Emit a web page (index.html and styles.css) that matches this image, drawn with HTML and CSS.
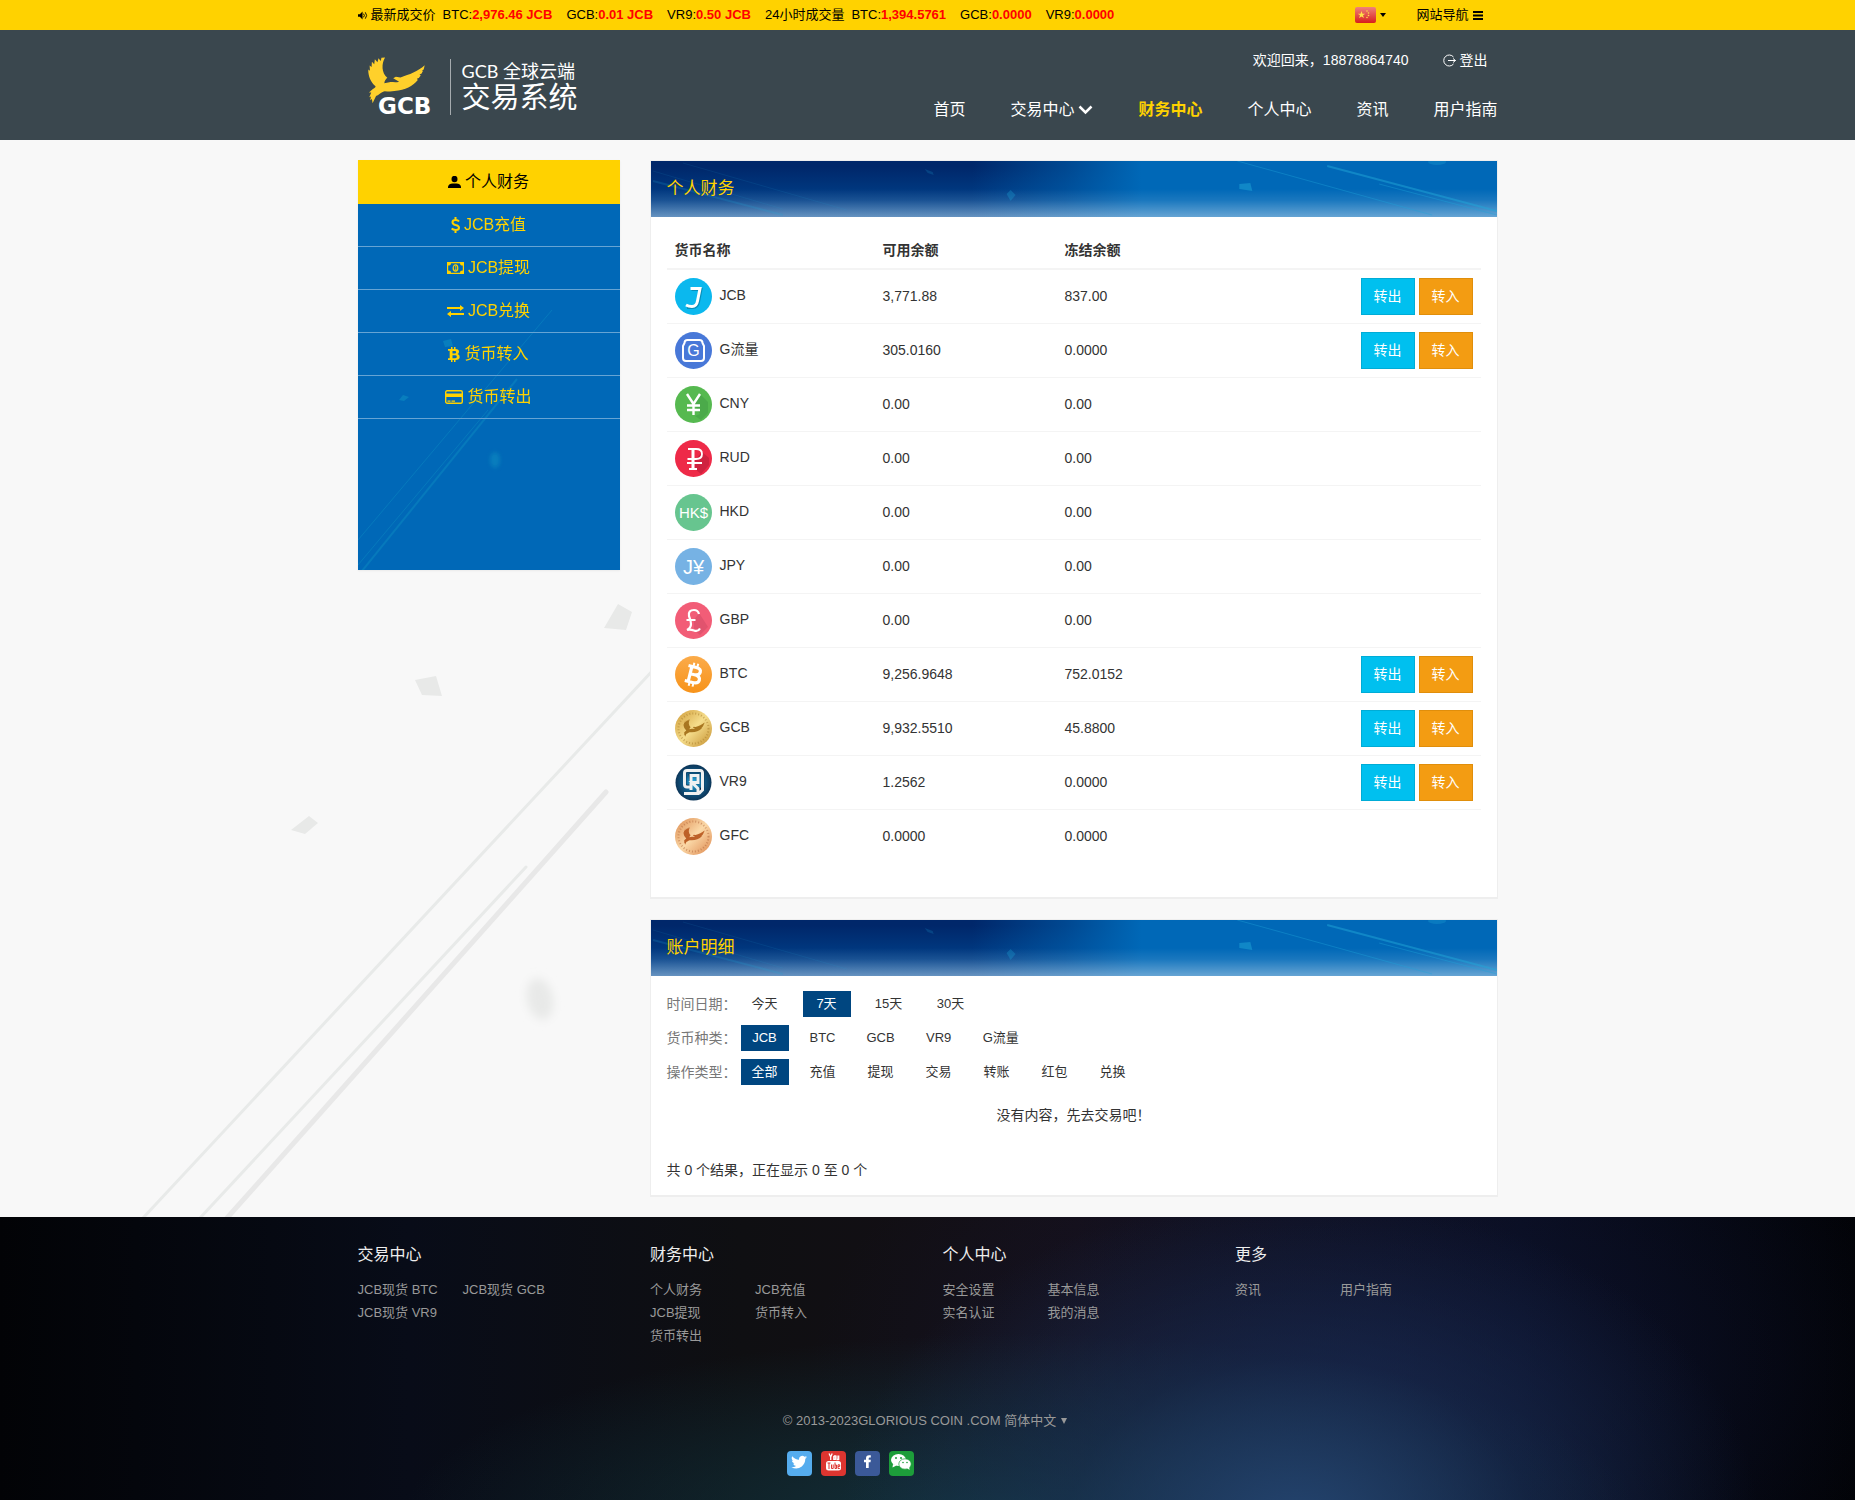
FILE: index.html
```html
<!DOCTYPE html>
<html lang="zh-CN">
<head>
<meta charset="utf-8">
<meta name="viewport" content="width=device-width, initial-scale=1">
<title>个人财务 - GCB 全球云端交易系统</title>
<link rel="stylesheet" href="styles.css">
</head>
<body>
<svg class="defs" aria-hidden="true">
  <defs>
    <symbol id="bird" viewBox="50 48 180 144">
      <path d="M105 51C94 70 94 98 112 113C106 118 103 124 103 130L122 126C130 126 138 128 148 125L130 115L138 110L152 112C180 103 205 94 226 75L223 88L217 91L221 92L216 101L210 103L214 106L208 114L202 116L205 120L198 128C180 145 150 158 104 154C90 158 84 168 78 168L67 191L65 178L60 182L62 170L57 173L63 158L56 158L67 148C75 144 76 142 76 139C62 128 53 108 54 88L59 92L58 76L64 80L65 64L72 72L74 57L82 66L85 54L92 62L94 52Z"/>
    </symbol>
    <symbol id="head-art" viewBox="0 0 847 56" preserveAspectRatio="none">
      <g fill="none" stroke="#1fa5d8">
        <path d="M32 2L196 49" opacity=".12"/>
        <path d="M2 10L132 48" opacity=".12"/>
        <path d="M2 20L132 54" stroke-width="2" opacity=".2"/>
        <path d="M587 0L782 54" opacity=".4"/>
        <path d="M677 5L847 50" stroke-width="2" opacity=".5"/>
        <path d="M729 23L847 54" opacity=".4"/>
      </g>
      <g fill="#1fa5d8">
        <path d="M274 8L282 11L283 14L277 12Z" opacity=".2"/>
        <path d="M356 33L360 29L365 34L360 40Z" opacity=".3"/>
        <path d="M589 23L600 22L602 30L589 28Z" opacity=".5"/>
        <ellipse cx="787" cy="1" rx="9" ry="3" opacity=".3"/>
      </g>
    </symbol>
    <linearGradient id="gold" x1="0" y1="0" x2="1" y2="1"><stop offset="0" stop-color="#cf9a35"/><stop offset=".5" stop-color="#f5dd8c"/><stop offset="1" stop-color="#c48f2e"/></linearGradient>
    <linearGradient id="bronze" x1="0" y1="0" x2="1" y2="1"><stop offset="0" stop-color="#dc8a4e"/><stop offset=".5" stop-color="#fbd9a8"/><stop offset="1" stop-color="#dd874d"/></linearGradient>
    <linearGradient id="orange" x1="0" y1="0" x2="0" y2="1"><stop offset="0" stop-color="#fbab4a"/><stop offset="1" stop-color="#f7931a"/></linearGradient>
    <radialGradient id="navy"><stop offset="0" stop-color="#2fb5e8"/><stop offset=".5" stop-color="#12618f"/><stop offset="1" stop-color="#0c3558"/></radialGradient>
    <filter id="soft" x="-50%" y="-50%" width="200%" height="200%"><feGaussianBlur stdDeviation="5"/></filter>
    <filter id="soft-small" x="-50%" y="-50%" width="200%" height="200%"><feGaussianBlur stdDeviation="2"/></filter>
  </defs>
</svg>

<div class="topbar">
  <div class="container topbar-row">
    <div class="ticker">
      <svg class="speaker" viewBox="0 0 11 9" aria-hidden="true"><path d="M0 3h2l3-3v9L2 6H0z"/><path d="M6 2.500q2 2 0 4M8 1q3 3.500 0 7" fill="none" stroke="#000"/></svg>
      <span class="ticker-label">最新成交价</span>
      <span class="quote">BTC:<b>2,976.46 JCB</b></span>
      <span class="quote">GCB:<b>0.01 JCB</b></span>
      <span class="quote">VR9:<b>0.50 JCB</b></span>
      <span class="ticker-label">24小时成交量</span>
      <span class="quote">BTC:<b>1,394.5761</b></span>
      <span class="quote">GCB:<b>0.0000</b></span>
      <span class="quote">VR9:<b>0.0000</b></span>
    </div>
    <div class="tools">
      <button class="tool" type="button" aria-label="语言">
        <svg class="flag" viewBox="0 0 21 16" aria-hidden="true"><defs><linearGradient id="flag-red" x1="0" y1="0" x2="0" y2="1"><stop offset="0" stop-color="#f0837a"/><stop offset="1" stop-color="#d81f1c"/></linearGradient></defs><rect width="21" height="16" rx="2" fill="url(#flag-red)"/><path d="M6.500 4l1 2.700h2.800L8 8.300l.9 2.700-2.400-1.600L4.100 11 5 8.300 2.700 6.700h2.800z" fill="#ffe14a"/><g fill="#ffd94a"><circle cx="12" cy="4" r=".8"/><circle cx="13.500" cy="6" r=".8"/><circle cx="13.500" cy="8.500" r=".8"/><circle cx="12" cy="10.500" r=".8"/></g></svg>
        <svg class="caret" viewBox="0 0 6 4" aria-hidden="true"><path d="M0 0h6L3 4z"/></svg>
      </button>
      <button class="tool" type="button">网站导航
        <svg class="bars" viewBox="0 0 10 9" aria-hidden="true"><path d="M0 0h10v2H0zM0 3.500h10v2H0zM0 7h10v2H0z"/></svg>
      </button>
    </div>
  </div>
</div>

<header class="header">
  <div class="container header-row">
    <a class="logo" href="#">
      <svg class="logo-mark" viewBox="0 0 68 62" role="img" aria-label="GCB">
        <use href="#bird" x="0" y="0" width="59" height="48" fill="#ffd02b"/>
        <text x="11" y="58" class="logo-letters">GCB</text>
      </svg>
      <span class="logo-words"><span class="logo-top">GCB 全球云端</span><span class="logo-name">交易系统</span></span>
    </a>
    <div class="header-side">
      <div class="user">
        <span>欢迎回来，18878864740</span>
        <a class="logout" href="#"><svg class="logout-icon" viewBox="0 0 13 13" fill="none" stroke="#fff" aria-hidden="true"><path d="M10.500 3A5.500 5.500 0 1 0 10.500 10M5 6.500h7.500M10 4.500l2.500 2-2.500 2"/></svg>登出</a>
      </div>
      <nav class="nav">
        <a href="#">首页</a>
        <a href="#">交易中心<svg class="chevron" viewBox="0 0 15 10" fill="none" stroke="#fff" stroke-width="2.500" aria-hidden="true"><path d="M1.500 1.500l6 6 6-6"/></svg></a>
        <a href="#" class="current">财务中心</a>
        <a href="#">个人中心</a>
        <a href="#">资讯</a>
        <a href="#">用户指南</a>
      </nav>
    </div>
  </div>
</header>

<div class="page">
  <svg class="page-art" viewBox="0 576 660 640" aria-hidden="true">
    <g fill="#e8e9e8">
      <path d="M618 603L632 611L626 629L604 627Z"/>
      <path d="M415 679L436 675L442 695L422 694Z"/>
      <path d="M291 829L309 815L318 822L305 833Z"/>
      <ellipse cx="540" cy="998" rx="13" ry="21" filter="url(#soft)" transform="rotate(-12 540 998)"/>
    </g>
    <g fill="none" stroke="#e8eae9" stroke-width="3" stroke-linecap="round">
      <path d="M655 667L143 1217"/>
      <path d="M526 866L200 1217"/>
      <path d="M606 791L227 1217" stroke-width="5" stroke="#e8e8e8"/>
    </g>
  </svg>
  <div class="container columns">
    <aside class="sidebar">
      <svg class="sidebar-art" viewBox="0 0 262 410" preserveAspectRatio="none" aria-hidden="true">
        <g fill="none" stroke="#14a0c8" opacity=".3"><path d="M194 150L0 380"/><path d="M130 250L0 405"/><path d="M159 219L4 411" stroke-width="2"/></g>
        <g fill="#14a0c8" opacity=".4"><path d="M85 181L93 179L95 186L87 187Z"/><path d="M41 240L45 235L51 237L46 241Z"/><ellipse cx="137" cy="300" rx="5" ry="8" filter="url(#soft-small)"/></g>
      </svg>
      <nav class="side-menu">
        <a href="#" class="current"><svg width="13" height="12" viewBox="0 0 13 12" fill="currentColor" aria-hidden="true"><ellipse cx="6.500" cy="3" rx="3" ry="3.200"/><path d="M0 12V10.500Q1 7.500 4.500 7.500h4Q12 7.500 13 10.500V12z"/></svg>个人财务</a>
        <a href="#"><svg width="9" height="16" viewBox="0 0 9 16" fill="none" stroke="currentColor" stroke-width="2" aria-hidden="true"><path d="M8 4.500Q7 3 4.500 3 1.500 3 1.500 5.200 1.500 7.200 4.500 8 8 8.800 8 10.800 8 13 4.500 13 2 13 .7 11.500M4.500 0v3M4.500 13v3"/></svg>JCB充值</a>
        <a href="#"><svg width="17" height="12" viewBox="0 0 17 12" aria-hidden="true"><path fill="currentColor" fill-rule="evenodd" d="M0 0h17v12H0zM4 1.200Q4 3.500 1.200 3.500v5Q4 8.500 4 10.800h9Q13 8.500 15.800 8.500v-5Q13 3.500 13 1.200z"/><ellipse cx="8.500" cy="6" rx="2.300" ry="3.200" fill="none" stroke="currentColor" stroke-width="1.200"/><path d="M8 4.500h.8V8M7.500 8h2" stroke="currentColor" stroke-width=".8" fill="none"/></svg>JCB提现</a>
        <a href="#"><svg width="17" height="12" viewBox="0 0 17 12" fill="currentColor" aria-hidden="true"><path d="M0 2h13V0L17 3l-4 3V4H0zM17 8H4V6L0 9l4 3v-2H17z"/></svg>JCB兑换</a>
        <a href="#"><svg width="12" height="15" viewBox="0 0 12 15" aria-hidden="true"><path fill="currentColor" fill-rule="evenodd" d="M0 2h3V0h1.500v2H6V0h1.500v2Q11 2.200 11 4.700 11 6.500 9.500 7 11.700 7.700 11.700 10 11.700 13 7.500 13v2H6v-2H4.500v2H3v-2H0v-1.800h1.700V3.800H0zM4.500 4v2.500H6.500Q8.200 6.500 8.200 5.200T6.500 4zM4.500 8.300v2.900H7Q8.800 11.200 8.800 9.700T7 8.300z"/></svg>货币转入</a>
        <a href="#"><svg width="18" height="14" viewBox="0 0 18 14" aria-hidden="true"><rect x=".7" y=".7" width="16.600" height="12.600" rx="1.500" fill="none" stroke="currentColor" stroke-width="1.400"/><path fill="currentColor" d="M1 3.500h16V7H1zM2.500 10.500h3v1.200h-3zM6.500 10.500h3.500v1.200H6.500z"/></svg>货币转出</a>
      </nav>
    </aside>

    <main class="content">
      <section class="panel">
        <div class="panel-head">
          <svg class="panel-art" aria-hidden="true"><use href="#head-art" width="100%" height="100%"/></svg>
          <h2>个人财务</h2>
        </div>
        <div class="panel-body balances-body">
          <table class="balances">
            <colgroup><col class="c-name"><col class="c-free"><col class="c-held"><col></colgroup>
            <thead><tr><th>货币名称</th><th>可用余额</th><th>冻结余额</th><th></th></tr></thead>
            <tbody>
              <tr><td><div class="coin"><svg viewBox="0 0 37 37" aria-hidden="true"><circle cx="18.500" cy="18.500" r="18.500" fill="#0bb8ee"/><g fill="none" stroke-width="3"><path d="M16.500 11.500H26L23.500 24Q22.500 29.500 18 29.500H12" stroke="#078fba"/><path d="M15.500 10.500H25L22.500 23Q21.500 28.500 17 28.500Q13.500 28.500 11 27" stroke="#fff"/></g></svg>JCB</div></td><td>3,771.88</td><td>837.00</td><td><div class="actions"><button class="btn out" type="button">转出</button><button class="btn in" type="button">转入</button></div></td></tr>
              <tr><td><div class="coin"><svg viewBox="0 0 37 37" aria-hidden="true"><circle cx="18.500" cy="18.500" r="18.500" fill="#4878d8"/><path d="M12.500 8h12q3 0 3 3l1.500 3v12q0 3-3 3H11q-3 0-3-3V14l1.500-3q0-3 3-3z" fill="none" stroke="#fff" stroke-width="2"/><text x="18.500" y="24" class="glyph s16">G</text></svg>G流量</div></td><td>305.0160</td><td>0.0000</td><td><div class="actions"><button class="btn out" type="button">转出</button><button class="btn in" type="button">转入</button></div></td></tr>
              <tr><td><div class="coin"><svg viewBox="0 0 37 37" aria-hidden="true"><circle cx="18.500" cy="18.500" r="18.500" fill="#56b950"/><path d="M25 8L19 18l6 10-5 2 6 4 7-7V16z" fill="#3d9440" opacity=".4"/><path d="M12 8l6.500 10L25 8M18.500 18v11M12 19.500h13M12 24h13" fill="none" stroke="#fff" stroke-width="2.400"/></svg>CNY</div></td><td>0.00</td><td>0.00</td><td></td></tr>
              <tr><td><div class="coin"><svg viewBox="0 0 37 37" aria-hidden="true"><circle cx="18.500" cy="18.500" r="18.500" fill="#ee2a48"/><path d="M27 12L20 20v9l6 5 8-9V18z" fill="#b01a36" opacity=".5"/><path d="M13 9h8q6 0 6 5t-6 5h-8.500M12 23h15M14 29h8" fill="none" stroke="#fff" stroke-width="1.800"/><path d="M18 9v20" stroke="#fff" stroke-width="3"/></svg>RUD</div></td><td>0.00</td><td>0.00</td><td></td></tr>
              <tr><td><div class="coin"><svg viewBox="0 0 37 37" aria-hidden="true"><circle cx="18.500" cy="18.500" r="18.500" fill="#67c58f"/><text x="18.500" y="24" class="glyph s15">HK$</text></svg>HKD</div></td><td>0.00</td><td>0.00</td><td></td></tr>
              <tr><td><div class="coin"><svg viewBox="0 0 37 37" aria-hidden="true"><circle cx="18.500" cy="18.500" r="18.500" fill="#76b2e4"/><text x="18.500" y="26" class="glyph s20">J¥</text></svg>JPY</div></td><td>0.00</td><td>0.00</td><td></td></tr>
              <tr><td><div class="coin"><svg viewBox="0 0 37 37" aria-hidden="true"><circle cx="18.500" cy="18.500" r="18.500" fill="#f25d77"/><path d="M24 11L19 18v10l6 5 8-8z" fill="#b93a58" opacity=".3"/><path d="M24 12q-1-4-5-4-6 0-5 6 2 5 2 8 0 4-4 6 3-1 7 .500t6-2M11.500 18h9" fill="none" stroke="#fff" stroke-width="2.200"/></svg>GBP</div></td><td>0.00</td><td>0.00</td><td></td></tr>
              <tr><td><div class="coin"><svg viewBox="0 0 37 37" aria-hidden="true"><circle cx="18.500" cy="18.500" r="18.500" fill="url(#orange)"/><g transform="rotate(14 18.500 18.500)" fill="none" stroke="#fff" stroke-width="3.200"><path d="M11.500 11h8q5 0 5 3.500t-5 4q6 0 6 4t-6 4h-8M15 11v15.500M15.500 18.500h5"/><path d="M16.500 7v4M20.500 7v4M16.500 26v4.500M20.500 26v4.500" stroke-width="2"/></g></svg>BTC</div></td><td>9,256.9648</td><td>752.0152</td><td><div class="actions"><button class="btn out" type="button">转出</button><button class="btn in" type="button">转入</button></div></td></tr>
              <tr><td><div class="coin"><svg viewBox="0 0 37 37" aria-hidden="true"><circle cx="18.500" cy="18.500" r="18.500" fill="url(#gold)"/><circle cx="18.500" cy="18.500" r="15" fill="none" stroke="#a67a2a" stroke-width="2" stroke-dasharray="1 2" opacity=".5"/><use href="#bird" x="8" y="9" width="22" height="18" fill="#a87620"/></svg>GCB</div></td><td>9,932.5510</td><td>45.8800</td><td><div class="actions"><button class="btn out" type="button">转出</button><button class="btn in" type="button">转入</button></div></td></tr>
              <tr><td><div class="coin"><svg viewBox="0 0 37 37" aria-hidden="true"><circle cx="18.500" cy="18.500" r="18" fill="url(#navy)"/><g fill="none" stroke="#07223d" stroke-width="2.500"><path d="M10 7h18v18h-6M10 7v15h6M15 11h8v8h-7z"/></g><g fill="none" stroke="#f1f1f1" stroke-width="3"><path d="M15 23H12Q9.500 23 9.500 20.500V9Q9.500 6.500 12 6.500H25Q27.500 6.500 27.500 9V26L24 29.500M16 26V11.500h7v7h-6l6 6v5H9"/></g></svg>VR9</div></td><td>1.2562</td><td>0.0000</td><td><div class="actions"><button class="btn out" type="button">转出</button><button class="btn in" type="button">转入</button></div></td></tr>
              <tr><td><div class="coin"><svg viewBox="0 0 37 37" aria-hidden="true"><circle cx="18.500" cy="18.500" r="18.500" fill="url(#bronze)"/><circle cx="18.500" cy="18.500" r="15" fill="none" stroke="#b0643a" stroke-width="2" stroke-dasharray="1 2" opacity=".5"/><use href="#bird" x="8" y="9" width="22" height="18" fill="#bd6128"/></svg>GFC</div></td><td>0.0000</td><td>0.0000</td><td></td></tr>
            </tbody>
          </table>
        </div>
      </section>

      <section class="panel">
        <div class="panel-head">
          <svg class="panel-art" aria-hidden="true"><use href="#head-art" width="100%" height="100%"/></svg>
          <h2>账户明细</h2>
        </div>
        <div class="panel-body">
          <div class="filters">
            <div class="filter"><span class="filter-label">时间日期：</span><div class="options wide"><a href="#">今天</a><a href="#" class="on">7天</a><a href="#">15天</a><a href="#">30天</a></div></div>
            <div class="filter"><span class="filter-label">货币种类：</span><div class="options"><a href="#" class="on">JCB</a><a href="#">BTC</a><a href="#">GCB</a><a href="#">VR9</a><a href="#">G流量</a></div></div>
            <div class="filter"><span class="filter-label">操作类型：</span><div class="options"><a href="#" class="on">全部</a><a href="#">充值</a><a href="#">提现</a><a href="#">交易</a><a href="#">转账</a><a href="#">红包</a><a href="#">兑换</a></div></div>
          </div>
          <p class="empty">没有内容，先去交易吧！</p>
          <p class="total">共 0 个结果，正在显示 0 至 0 个</p>
        </div>
      </section>
    </main>
  </div>
</div>

<footer class="footer">
  <div class="container">
    <div class="sitemap">
      <section><h3>交易中心</h3><div class="links"><a href="#">JCB现货 BTC</a><a href="#">JCB现货 GCB</a><a href="#">JCB现货 VR9</a></div></section>
      <section><h3>财务中心</h3><div class="links"><a href="#">个人财务</a><a href="#">JCB充值</a><a href="#">JCB提现</a><a href="#">货币转入</a><a href="#">货币转出</a></div></section>
      <section><h3>个人中心</h3><div class="links"><a href="#">安全设置</a><a href="#">基本信息</a><a href="#">实名认证</a><a href="#">我的消息</a></div></section>
      <section><h3>更多</h3><div class="links"><a href="#">资讯</a><a href="#">用户指南</a></div></section>
    </div>
    <div class="legal">
      <div class="copyright">© 2013-2023GLORIOUS COIN .COM <button class="lang" type="button">简体中文 <svg viewBox="0 0 6 6" aria-hidden="true"><path d="M0 0h6L3 6z"/></svg></button></div>
      <div class="social">
        <a href="#" class="twitter" aria-label="Twitter"><svg viewBox="0 0 25 25" aria-hidden="true"><path fill="#fff" d="M20 6q-1 .6-1.800.7Q19.300 6 19.600 5q-1 .6-2.100.8A3.300 3.300 0 0 0 12 8.800Q8 8.600 5.300 5.200 3.700 8 6.300 9.800 5.500 9.800 4.800 9.300 4.800 11.800 7.400 12.600 6.600 12.800 6 12.600 6.700 14.800 9.100 14.900 7 16.400 4.300 16.200 10 19.300 14.800 15.500 18.300 12.500 18.300 7.800 19.300 7 20 6z"/></svg></a>
        <a href="#" class="youtube" aria-label="YouTube"><svg viewBox="0 0 25 25" aria-hidden="true"><rect x="5" y="10" width="15" height="9.500" rx="2.500" fill="#fff"/><path fill="none" stroke="#fff" stroke-width="1.300" d="M8 2.500l1.700 3.500L11.200 2.500M9.700 6v3M12.800 5v3.300h1.500V5h-1.500M16 4.500v4h1.700M17.700 4.500V9"/><path fill="none" stroke="#dd3530" d="M6.500 12h3M8 12v6M10.500 13.500v4h1.700v-4M14 11.500v6h1.500v-3.500H14M17 15.500h1.700v-1.700H17v3.700h1.800"/></svg></a>
        <a href="#" class="facebook" aria-label="Facebook"><svg viewBox="0 0 25 25" aria-hidden="true"><path fill="#fff" d="M11 17V11.200H9V8.800h2V7.300Q11 4.200 14 4.200h1.800v2.300h-1.200q-.9 0-.9 1v1.300h2.100l-.3 2.400h-1.800V17z"/></svg></a>
        <a href="#" class="wechat" aria-label="WeChat"><svg viewBox="0 0 25 25" aria-hidden="true"><g fill="#fff"><ellipse cx="9.500" cy="9" rx="7.500" ry="6"/><path d="M4 13l-.5 3.500 4-2z"/></g><g fill="#fff" stroke="#1d9d3a" stroke-width=".7"><ellipse cx="16" cy="13" rx="6.200" ry="5.200"/></g><path d="M18 17l2.500 2-.3-3.500z" fill="#fff"/><g fill="#1d9d3a"><circle cx="7" cy="7" r="1"/><circle cx="12" cy="7" r="1"/><circle cx="14" cy="11.500" r=".8"/><circle cx="18" cy="11.500" r=".8"/></g></svg></a>
      </div>
    </div>
  </div>
</footer>
</body>
</html>
```
FILE: styles.css
```css
* { box-sizing: border-box; }

body {
  margin: 0;
  min-height: 100vh;
  display: flex;
  flex-direction: column;
  background: #f8f8f8;
  color: #333;
  font: 14px/20px "Liberation Sans", "Noto Sans CJK SC", sans-serif;
}

a { color: inherit; text-decoration: none; }
h2, h3, p { margin: 0; font-weight: normal; }
button { font: inherit; color: inherit; background: none; border: 0; padding: 0; cursor: pointer; }
svg { display: block; flex: none; }
.defs { position: absolute; width: 0; height: 0; }

.container { width: 100%; max-width: 1170px; margin: 0 auto; padding: 0 15px; }

/* Ticker bar */
.topbar { background: #ffd200; color: #000; font-size: 13px; }
.topbar-row { display: flex; justify-content: space-between; align-items: center; min-height: 30px; }
.ticker { display: flex; align-items: center; white-space: nowrap; }
.speaker { width: 10px; height: 9px; margin-right: 3px; }
.ticker-label { margin-right: 7px; }
.quote { margin-right: 14px; }
.quote b { color: #f00; }
.tools { display: flex; align-items: center; gap: 30px; padding-right: 15px; }
.tool { display: flex; align-items: center; gap: 4px; }
.flag { width: 21px; height: 16px; }
.caret { width: 6px; height: 4px; }
.bars { width: 10px; height: 9px; }

/* Header */
.header { background: #3a474e; color: #fff; }
.header-row { display: flex; justify-content: space-between; min-height: 110px; }
.logo { display: flex; align-items: center; padding: 3px 0 0 9px; }
.logo-mark { width: 68px; height: 62px; }
.logo-letters { font: bold 23px "DejaVu Sans", sans-serif; fill: #fff; }
.logo-words {
  display: flex;
  flex-direction: column;
  margin-left: 15px;
  padding: 0 0 4px 11px;
  border-left: 1px solid #a5abae;
  font-family: Lato, "Noto Sans CJK SC", sans-serif;
}
.logo-top { font-size: 18px; line-height: 24px; }
.logo-name { font-size: 29px; line-height: 28px; }
.header-side { display: flex; flex-direction: column; align-items: flex-end; padding-top: 20px; gap: 28px; }
.user { display: flex; gap: 34px; padding-right: 10px; }
.logout { display: flex; align-items: center; gap: 4px; }
.logout-icon { width: 13px; height: 13px; }
.nav { display: flex; gap: 45px; font-size: 16px; line-height: 24px; }
.nav a { display: flex; align-items: center; gap: 4px; }
.nav .current { color: #ffd200; font-weight: bold; }
.chevron { width: 15px; height: 10px; }

/* Page */
.page { position: relative; flex: 1; }
.page-art { position: absolute; left: 0; bottom: 0; width: 660px; height: 640px; }
.columns {
  position: relative;
  display: grid;
  grid-template-columns: 262px minmax(0, 1fr);
  align-items: start;
  gap: 30px;
  padding-top: 20px;
  padding-bottom: 20px;
}

.sidebar { position: relative; min-height: 410px; background: #0068b7; box-shadow: 0 1px 2px rgba(0, 0, 0, .06); }
.sidebar-art { position: absolute; inset: 0; width: 100%; height: 100%; }
.side-menu { position: relative; color: #ffd200; font-size: 16px; line-height: 42px; }
.side-menu a { display: flex; justify-content: center; align-items: center; gap: 4px; border-bottom: 1px solid #66a4d4; }
.side-menu .current { background: #ffd200; color: #000; border-color: #ffd200; line-height: 43px; }

.content { display: grid; gap: 20px; }
.panel { background: #fff; border: 1px solid #eee; border-bottom-width: 2px; }
.panel-head {
  position: relative;
  padding: 16px;
  color: #ffd200;
  background:
    linear-gradient(rgba(255, 255, 255, 0) 50%, rgba(255, 255, 255, .1) 70%, rgba(255, 255, 255, .4)),
    linear-gradient(90deg, rgba(0, 104, 183, 0) 38%, rgba(0, 104, 183, .5) 49%, #0068b7 58%),
    linear-gradient(#00276a 10%, #004a96);
}
.panel-art { position: absolute; inset: 0; width: 100%; height: 100%; }
.panel-head h2 { position: relative; font-size: 17px; line-height: 24px; }
.panel-body { padding: 15px 16px; }
.balances-body { padding-bottom: 34px; }

.balances { width: 100%; border-collapse: separate; border-spacing: 0; table-layout: fixed; }
.c-name { width: 208px; }
.c-free { width: 182px; }
.c-held { width: 182px; }
.balances th { padding: 8px; text-align: left; border-bottom: 2px solid #f4f4f4; }
.balances td { padding: 8px; height: 54px; border-top: 1px solid #f4f4f4; vertical-align: top; line-height: 36px; }
.balances tr:first-child td { border-top: 0; height: 53px; }
.coin { display: flex; align-items: flex-start; gap: 8px; line-height: 34px; }
.coin svg { width: 37px; height: 37px; }
.glyph { fill: #fff; text-anchor: middle; font-family: "Liberation Sans", sans-serif; }
.s15 { font-size: 15px; }
.s16 { font-size: 16px; }
.s20 { font-size: 20px; }
.actions { display: flex; justify-content: flex-end; gap: 4px; }
.btn { padding: 0 12px 1px; height: 37px; border: 1px solid; color: #fff; line-height: 20px; }
.out { background: #00c0ef; border-color: #00acd6; }
.in { background: #f39c12; border-color: #e08e0b; }

.filters { display: grid; gap: 8px; }
.filter { display: flex; align-items: center; gap: 4px; }
.filter-label { color: #777; }
.options { display: flex; flex-wrap: wrap; gap: 10px; font-size: 13px; line-height: 26px; }
.options.wide { gap: 14px; }
.options a { min-width: 48px; padding: 0 10px; text-align: center; }
.options .on { background: #004680; color: #fff; }
.empty { margin-top: 20px; text-align: center; }
.total { margin-top: 35px; }

/* Footer */
.footer {
  padding: 26px 0 25px;
  color: #999;
  font-size: 13px;
  background:
    radial-gradient(ellipse 460px 330px at 70% 108%, #24446f, rgba(27, 50, 90, .5) 50%, rgba(20, 30, 70, 0)),
    radial-gradient(ellipse 620px 190px at 55% 108%, rgba(18, 62, 74, .8), rgba(16, 48, 56, 0)),
    radial-gradient(ellipse 560px 300px at 74% 50%, rgba(18, 24, 60, .6), rgba(10, 14, 36, 0)),
    linear-gradient(90deg, #020306, #080c18 22%, #0f0f12 40%, #150f16 58%, #080c1c 82%, #020307);
}
.sitemap { display: grid; grid-template-columns: repeat(4, 1fr); gap: 30px; min-height: 168px; }
.sitemap h3 { color: #eee; font-size: 16px; line-height: 24px; margin-bottom: 11px; }
.links { display: grid; grid-template-columns: 105px 105px; line-height: 23px; }
.legal { width: fit-content; margin: 0 auto; padding-right: 5px; }
.copyright { line-height: 20px; }
.lang { display: inline-flex; align-items: center; gap: 5px; }
.lang svg { width: 6px; height: 6px; fill: #999; }
.social { display: flex; gap: 9px; margin-top: 20px; padding-left: 4px; }
.social a { border-radius: 4px; }
.social svg { width: 25px; height: 25px; }
.twitter { background: #55acee; }
.youtube { background: #dd3530; }
.facebook { background: #3b5998; }
.wechat { background: #1d9d3a; }
```
